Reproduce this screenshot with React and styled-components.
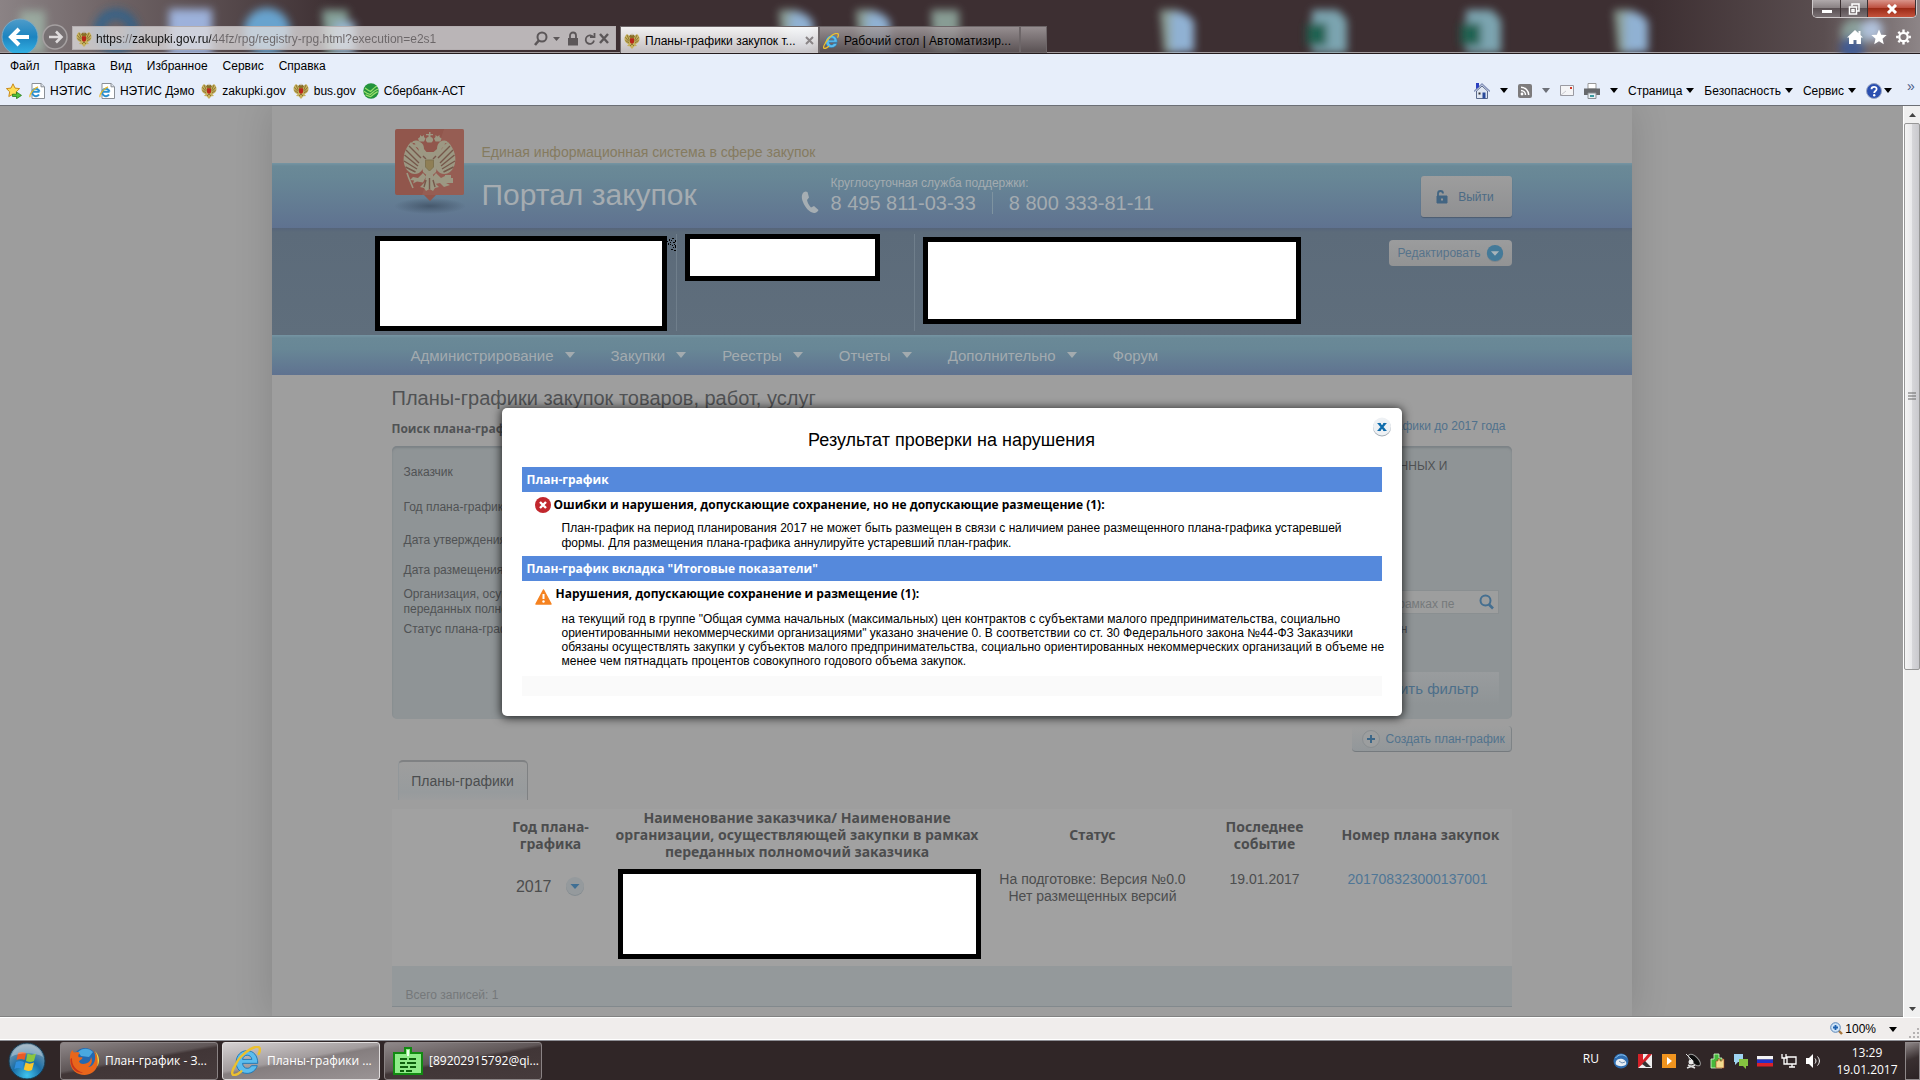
import React from "react";
import styled, { createGlobalStyle, css } from "styled-components";

const ui = `"Liberation Sans", Arial, sans-serif`;
const bold = `"Noto Sans", "Liberation Sans", sans-serif`;
const smallBold = `"Open Sans", "Liberation Sans", sans-serif`;

const GlobalStyle = createGlobalStyle`
  * { box-sizing: border-box; }
  body {
    margin: 0;
    font-family: ${ui};
    font-size: 12px;
    color: #000;
  }
  button, input, select { font-family: inherit; font-size: inherit; }
  a { text-decoration: none; }
  svg { flex: none; display: block; }
`;

const Screen = styled.div`
  display: flex;
  flex-direction: column;
  height: 100vh;
  overflow: hidden;
`;

/* ---------- browser frame ---------- */

const Glass = styled.header`
  position: relative;
  height: 54px;
  display: flex;
  align-items: flex-end;
  overflow: hidden;
  background: linear-gradient(90deg, #8b8385 0, #6f6466 110px, #3d2f32 340px, #3d2f32 86%, #5a4e50 95%, #8d8587 100%);
  border-bottom: 1px solid #241c1e;
  box-shadow: inset 0 -1px #a39c9e;
`;

const Backdrop = styled.svg`
  position: absolute;
  left: 0;
  top: 0;
  opacity: 0.88;
`;

const AddressRow = styled.div`
  position: relative;
  flex: 1;
  display: flex;
  align-items: flex-end;
  height: 54px;
  padding-right: 8px;
`;

const NavButtons = styled.div`
  width: 72px;
  height: 36px;
`;

const Address = styled.form`
  display: flex;
  align-items: center;
  gap: 4px;
  width: 544px;
  height: 24px;
  margin: 0 4px 3px 0;
  padding: 1px 5px 0 3px;
  background: rgba(222, 219, 220, 0.78);
  border: 1px solid #b4aeb0;
`;

const Url = styled.input`
  flex: 1;
  min-width: 0;
  padding: 0;
  border: 0;
  outline: 0;
  color: transparent;
  background: linear-gradient(90deg, #111 27px, #6b6668 27px, #6b6668 37px, #111 37px, #111 115px, #6b6668 115px);
  background-clip: text;
  -webkit-background-clip: text;
`;

const Tab = styled.button`
  display: flex;
  align-items: center;
  gap: 5px;
  width: ${(p) => p.$w}px;
  height: 27px;
  padding: 1px 4px 0 3px;
  border: 1px solid #6d6668;
  border-bottom: 0;
  white-space: nowrap;
  background: ${(p) => p.$active
    ? "linear-gradient(180deg, rgba(251,251,251,.95), rgba(230,227,228,.9) 60%, rgba(207,203,205,.9))"
    : "linear-gradient(180deg, rgba(165,158,160,.85), rgba(95,88,90,.8))"};
  span { flex: 1; text-align: left; }
`;

const GlassIcons = styled.div`
  display: flex;
  gap: 8px;
  margin-left: auto;
  margin-bottom: 8px;
`;

const Caption = styled.div`
  position: absolute;
  right: 3px;
  top: 0;
  display: flex;
  height: 18px;
  border: 1px solid #cfcacb;
  border-top: 0;
  border-radius: 0 0 5px 5px;
  overflow: hidden;
`;

const CaptionButton = styled.button`
  display: grid;
  place-items: center;
  width: ${(p) => p.$w}px;
  padding: 0;
  border: 0;
  border-right: 1px solid #3a3032;
  background: ${(p) => p.$close
    ? "linear-gradient(180deg, #d9948a, #bd5040 45%, #9c2a16 50%, #c4523c)"
    : "linear-gradient(180deg, #b0a9ab, #8a8284 45%, #5a5053 50%, #7a7174)"};
`;

const Bars = styled.div`
  background: #e7eefa;
  border-bottom: 1px solid #6c6f75;
`;

const MenuBar = styled.nav`
  display: flex;
  align-items: center;
  gap: 15px;
  height: 24px;
  padding-left: 10px;
`;

const PlainButton = styled.button`
  display: flex;
  align-items: center;
  gap: ${(p) => p.$gap || 4}px;
  padding: 0;
  border: 0;
  background: none;
  color: #000;
`;

const FavBar = styled.div`
  display: flex;
  align-items: center;
  gap: 7px;
  height: 27px;
  padding: 0 0 2px 6px;
`;

const FavLink = styled.a`
  display: flex;
  align-items: center;
  gap: 5px;
  color: #000;
`;

const Commands = styled.div`
  display: flex;
  align-items: center;
  gap: 10px;
  margin-left: auto;
`;

const Chevron = styled.button`
  align-self: flex-start;
  width: 18px;
  padding: 0;
  border: 0;
  background: none;
  color: #4a5a86;
  line-height: 6px;
  font-size: 14px;
`;

/* ---------- page ---------- */

const Viewport = styled.div`
  flex: 1;
  min-height: 0;
  display: flex;
  border-bottom: 1px solid #fff;
`;

const Page = styled.div`
  position: relative;
  flex: 1;
  overflow: hidden;
  background: #9d9d9d;
  border-bottom: 1px solid #828282;
`;

const Site = styled.div`
  width: 1360px;
  max-width: 100%;
  min-height: 100%;
  margin: 0 auto;
  background: #9e9e9e;
  box-shadow: 0 0 36px rgba(0, 0, 0, 0.15);
  color: #505254;
`;

const blueBand = "linear-gradient(180deg, #7695a3 0, #6a8997 3px, #688796 14px, #5f7290 100%)";

const Header = styled.header`
  display: grid;
  grid-template-columns: 90px 319px auto 1fr auto;
  grid-template-rows: 57px 65px;
  padding: 0 120px;
  background: ${blueBand} 0 57px / 100% 65px no-repeat;
`;

const Emblem = styled.a`
  grid-row: 1 / 3;
  padding-top: 23px;
`;

const Subtitle = styled.div`
  grid-column: 2 / -1;
  padding-top: 36px;
  font-size: 14px;
  line-height: 20px;
  color: #857b60;
`;

const SiteTitle = styled.div`
  padding-top: 12px;
  font-size: 30px;
  line-height: 40px;
  color: #a5acb1;
`;

const Support = styled.div`
  display: flex;
  align-items: flex-end;
  gap: 12px;
  height: 51px;
  line-height: 18px;
  color: #a3abb0;
`;

const Phones = styled.div`
  display: flex;
  font-size: 20px;
  line-height: 22px;
  span + span {
    margin-left: 16px;
    padding-left: 16px;
    border-left: 1px solid #7e93a0;
  }
`;

const Logout = styled.button`
  grid-column: 5;
  align-self: start;
  display: flex;
  align-items: center;
  justify-content: center;
  gap: 10px;
  width: 91px;
  height: 41px;
  margin-top: 13px;
  padding: 0 8px 0 6px;
  border: 0;
  border-radius: 3px;
  background: linear-gradient(180deg, #9d9d9d, #8f9092);
  box-shadow: 0 1px 1px #4d5c70;
  color: #4c6b85;
`;

const Strip = styled.div`
  display: grid;
  grid-template-columns: 301px 238px 1fr auto;
  height: 107px;
  padding: 6px 120px 7px 103px;
  background: linear-gradient(180deg, #56657a 0, #5c6b7a 4px, #5f6e7c 100%);
`;

const StripCell = styled.div`
  display: flex;
  align-items: flex-start;
  ${(p) => p.$line && css`
    padding-left: 8px;
    border-left: 1px solid #6f7e8b;
  `}
`;

const Redacted = styled.div`
  width: ${(p) => p.$w}px;
  height: ${(p) => p.$h}px;
  margin-top: ${(p) => p.$top || 0}px;
  border: 5px solid #000;
  background: #fff;
`;

const EditButton = styled.button`
  display: flex;
  align-items: center;
  gap: 5px;
  height: 26px;
  margin-top: 6px;
  padding: 0 8px 0 9px;
  border: 0;
  border-radius: 4px;
  background: linear-gradient(180deg, #9b9c9d, #929394);
  color: #56738b;
`;

const SiteNav = styled.nav`
  display: flex;
  align-items: center;
  gap: 36px;
  height: 40px;
  padding-left: 139px;
  background: ${blueBand};
  a {
    display: flex;
    align-items: center;
    gap: 11px;
    font-size: 15px;
    color: #a3abaf;
  }
`;

const Content = styled.main`
  padding: 11px 120px 0;
`;

const Heading = styled.h1`
  margin: 0;
  font-size: 20px;
  font-weight: 400;
  line-height: 24px;
`;

const SubRow = styled.div`
  display: flex;
  align-items: center;
  justify-content: space-between;
  height: 36px;
  padding-right: 6px;
  h2 {
    margin: 0;
    font: bold 12px ${smallBold};
  }
  a { color: #50718c; padding-bottom: 4px; }
`;

const Filter = styled.form`
  height: 273px;
  padding: 9px 13px 0 12px;
  border-radius: 5px;
  background: #8f9496;
  box-shadow: inset 0 2px 2px #7c8286;
`;

const Field = styled.div`
  display: flex;
  align-items: center;
  justify-content: space-between;
  height: ${(p) => p.$h}px;
  line-height: 15px;
  white-space: nowrap;
`;

const Value = styled.div`
  padding-top: ${(p) => p.$top || 0}px;
  padding-right: ${(p) => p.$right}px;
`;

const Control = styled.input`
  width: 300px;
  height: 22px;
  margin-right: 360px;
  border: 1px solid #83898c;
  background: #9c9d9e;
`;

const SearchBox = styled.div`
  display: flex;
  align-items: center;
  width: 600px;
  height: 24px;
  padding-right: 4px;
  background: #9d9e9e;
  border: 1px solid #8a8f91;
  input {
    flex: 1;
    padding: 4px 24px 0 0;
    border: 0;
    outline: 0;
    background: none;
    text-align: right;
  }
  input::placeholder { color: #767a7c; }
`;

const ClearButton = styled.button`
  display: block;
  height: 33px;
  margin: 32px 0 0 auto;
  padding: 0 20px;
  border: 0;
  background: linear-gradient(180deg, #999c9e, #8f9496);
  font-size: 15px;
  color: #4d6f8a;
`;

const CreateButton = styled.button`
  display: flex;
  align-items: center;
  gap: 6px;
  width: 160px;
  height: 26px;
  margin: 7px 0 0 auto;
  padding: 0 0 0 10px;
  border: 0;
  border-right: 1px solid #7e8386;
  border-bottom: 1px solid #757a7e;
  border-radius: 4px;
  background: linear-gradient(180deg, #9e9e9e, #92979a);
  white-space: nowrap;
  color: #52738d;
`;

const PlanTab = styled.button`
  display: block;
  width: 130px;
  height: 40px;
  margin: 8px 0 9px 6px;
  border: 0;
  border-top: 2px solid #7f8183;
  border-right: 1px solid #7f8183;
  border-left: 1px solid #92979a;
  border-radius: 5px 5px 0 0;
  background: linear-gradient(180deg, #9e9e9e, #979b9d 80%, #9c9d9e);
  font-size: 14px;
  color: #4b4d4f;
`;

const PlanTable = styled.table`
  width: 100%;
  table-layout: fixed;
  border-collapse: collapse;
  background: #a1a1a1;
  font-size: 14px;
  line-height: 17px;
  text-align: center;
  color: #4c4d4e;
  th {
    height: 52px;
    padding: 0 0 2px;
    font: bold 14px/17px ${bold};
    white-space: nowrap;
  }
  td {
    height: 104px;
    padding: 9px 0 0;
    vertical-align: top;
  }
  th:last-child, td:last-child { padding-right: 18px; }
  a { color: #4f7696; }
`;

const NameCell = styled.td`
  && { padding: 7px 0 0 21px; }
`;

const Year = styled.div`
  display: flex;
  align-items: center;
  justify-content: flex-end;
  gap: 13px;
  height: 30px;
  padding-right: 12px;
  font-size: 16px;
`;

const TableFooter = styled.div`
  height: 41px;
  padding: 22px 14px 0;
  background: #94999b;
  border-bottom: 1px solid #82898d;
  line-height: 15px;
  color: #75787a;
`;

/* ---------- dialog ---------- */

const Overlay = styled.div`
  position: absolute;
  inset: 0;
  display: flex;
  align-items: flex-start;
  justify-content: center;
  padding-top: 302px;
`;

const Dialog = styled.section`
  position: relative;
  width: 900px;
  padding: 20px;
  border-radius: 5px;
  background: #fff;
  box-shadow: 0 1px 10px 1px rgba(0, 0, 0, 0.75);
  h2 {
    margin: 0 0 15px;
    font-size: 18px;
    font-weight: 400;
    line-height: 24px;
    text-align: center;
  }
`;

const CloseButton = styled.button`
  position: absolute;
  right: 10px;
  top: 9px;
  padding: 0;
  border: 0;
  background: none;
`;

const SectionBar = styled.h3`
  margin: 0;
  padding-left: 5px;
  background: #5589dc;
  font: bold 12px/25px ${smallBold};
  color: #fff;
`;

const IssueTitle = styled.h4`
  display: flex;
  align-items: center;
  gap: 3px;
  height: 25px;
  margin: 0;
  padding-left: 13px;
  font: bold 12px ${smallBold};
`;

const IssueText = styled.p`
  margin: 0;
  padding: ${(p) => (p.$long ? "6px 0 8px 40px" : "4px 0 5px 40px")};
  line-height: ${(p) => (p.$long ? 14 : 15)}px;
  white-space: nowrap;
`;

const DialogFooter = styled.div`
  height: 20px;
  background: #fafafa;
`;

/* ---------- scrollbar, status bar, taskbar ---------- */

const Scrollbar = styled.div`
  display: flex;
  flex-direction: column;
  width: 17px;
  background: #f0f0f0;
  border-left: 1px solid #fff;
`;

const ScrollArrow = styled.button`
  display: grid;
  place-items: center;
  height: 17px;
  margin-top: ${(p) => (p.$end ? "auto" : 0)};
  padding: 0;
  border: 0;
  background: none;
`;

const Thumb = styled.div`
  display: grid;
  place-items: center;
  height: 60%;
  border: 1px solid #979797;
  border-radius: 2px;
  background: linear-gradient(90deg, #f5f5f5, #e9e9eb 48%, #d6d6d9 52%, #c9c9cd);
`;

const StatusBar = styled.div`
  display: flex;
  align-items: center;
  justify-content: flex-end;
  height: 22px;
  background: #f0edec;
  border-bottom: 1px solid #fff;
`;

const Taskbar = styled.footer`
  display: flex;
  align-items: center;
  gap: 4px;
  height: 40px;
  padding-left: 8px;
  background: #302627;
  border-top: 1px solid #8e8f95;
  font-family: "Open Sans", "Liberation Sans", sans-serif;
  color: #fff;
`;

const StartButton = styled.button`
  width: 48px;
  height: 38px;
  padding: 0;
  border: 0;
  background: none;
`;

const TaskButton = styled.button`
  flex: none;
  display: flex;
  align-items: center;
  gap: 6px;
  width: 158px;
  height: 38px;
  padding: 0 0 0 8px;
  border: 1px solid ${(p) => (p.$active ? "#e0dddd" : "#8a8384")};
  border-radius: 3px;
  background: ${(p) => p.$active
    ? "linear-gradient(170deg, #d5d1d2 0, #a29c9d 45%, #857e7f 50%, #9a9495 100%)"
    : "linear-gradient(170deg, #8f8889 0, #5f5657 45%, #413637 50%, #463b3c 100%)"};
  white-space: nowrap;
  color: #fff;
`;

const Tray = styled.div`
  display: flex;
  align-items: center;
  margin-left: auto;
`;

const TrayIcons = styled.div`
  display: flex;
  gap: 8px;
  padding: 0 8px 0 14px;
`;

const Lang = styled.span`
  padding-bottom: 4px;
`;

const Clock = styled.div`
  width: 76px;
  text-align: center;
  line-height: 17px;
`;

const ShowDesktop = styled.button`
  width: 15px;
  height: 38px;
  padding: 0;
  border: 1px solid #8e8889;
  background: linear-gradient(160deg, #8f8889, #3a3031 45%, #2c2324);
`;

/* ---------- icons ---------- */

const Arrow = ({ w = 8, h = 5, color = "#000", up }) => (
  <svg width={w} height={h} viewBox="0 0 10 6" preserveAspectRatio="none">
    <path d={up ? "M0 6h10L5 0z" : "M0 0h10L5 6z"} fill={color} />
  </svg>
);

const Eagle = ({ w = 16, h = 16 }) => (
  <svg width={w} height={h} viewBox="0 0 16 16">
    <path d="M6.500 5C5.500 3 4.500 1.800 3 1 1.500 2 .3 4 .5 6.500.7 9 2.500 10.800 4.700 11L3 13l2.600.3L8 16l2.400-2.700L13 13l-1.700-2c2.200-.2 4-2 4.200-4.500C15.700 4 14.500 2 13 1c-1.500.8-2.500 2-3.500 4z" fill="#c6b05c" />
    <path d="M3 2 5.500 7.500M1.300 4.300 5 8.500M1.500 7.500 5 10M13 2l-2.500 5.500M14.700 4.300 11 8.500M14.500 7.500 11 10M6 13l2-2 2 2" fill="none" stroke="#7b672a" strokeWidth=".8" />
    <path d="M5 3.500 6.300 1.500l1.200 1L8 .3l.5 2.200 1.200-1L11 3.500 9.500 5.300h-3z" fill="#8a7027" />
    <path d="M6 5.300h4v4.200L8 11 6 9.500z" fill="#b8261a" />
  </svg>
);

const IeGlyph = ({ size = 16 }) => (
  <svg width={size} height={size} viewBox="0 0 32 32">
    <path d="M28.500 18.500H12.300c.4 3.300 2.300 5.300 5 5.300 2 0 3.600-.9 4.500-2.800h6.200c-1.500 5-5.700 8.200-10.900 8.200-7 0-11.600-5-11.600-11.700C5.500 10.200 10.500 5 17 5c7.200 0 11.600 5.300 11.500 13.500zM22.300 14.300c-.5-2.800-2.400-4.500-5-4.500-2.500 0-4.400 1.700-5 4.500z" fill="#5cbdee" stroke="#1b76b8" strokeWidth="1" />
    <path d="M5 20C-.5 28 .8 31.500 4 31c2-.3 4.600-1.900 7-4M29.500 8.500C31.700 4.200 31 1.500 29 1 25 .2 17 4.500 10.500 11.500 8 14.200 6 17.500 4.800 20" fill="none" stroke="#ecc02f" strokeWidth="2.600" strokeLinecap="round" />
  </svg>
);

const IePage = () => (
  <svg width="16" height="16" viewBox="0 0 16 16">
    <path d="M3 .5h9l3.500 3.300v11.700H3z" fill="#fff" stroke="#8a8f96" />
    <path d="M12 .5v3.300h3.500" fill="#dde3ea" stroke="#8a8f96" />
    <path d="M10.500 8.800H3.800M10 11.500A3.700 3.700 0 1 1 10.500 8.500" fill="none" stroke="#2a8fd0" strokeWidth="2" />
    <path d="M1.200 14C0 12.500 3.500 6 9 3.800" fill="none" stroke="#e8b92a" strokeWidth="1.300" />
  </svg>
);

const FavStar = () => (
  <svg width="16" height="16" viewBox="0 0 16 16">
    <path d="m7 .8 2 4.300 4.600.5-3.400 3.200.9 4.700L7 11.200l-4.200 2.300.9-4.700L.4 5.600 5 5.100z" fill="#ffdf57" stroke="#c98b1c" />
    <path d="M6.500 11.200h4V9l5 3.400-5 3.300v-2.200h-4z" fill="#4fc23a" stroke="#2a7a1d" strokeWidth=".8" />
  </svg>
);

const SberIcon = () => (
  <svg width="16" height="16" viewBox="0 0 16 16">
    <circle cx="8" cy="8" r="7.700" fill="#23933c" />
    <path d="M2 5c2 1.500 3.500 2.500 5.500 3.500C10 6 12 4 14 3M1 8.200c2 1.600 4 2.600 6.300 3.300 2.700-2.500 5-4.500 7.900-5.500M2.500 11.800c2 1 3.500 1.500 5.200 1.800 2-2 4-3.500 7-5" fill="none" stroke="#9be06a" strokeWidth="1.200" />
  </svg>
);

const LogoEmblem = () => (
  <svg width="90" height="88" viewBox="0 0 90 88">
    <defs>
      <radialGradient id="logoShade">
        <stop offset="0" stopColor="#3c4d60" stopOpacity=".75" />
        <stop offset="1" stopColor="#3c4d60" stopOpacity="0" />
      </radialGradient>
    </defs>
    <ellipse cx="38" cy="77" rx="36" ry="8" fill="url(#logoShade)" />
    <path d="M5 0h65a2 2 0 0 1 2 2v62a2 2 0 0 1-2 2H44l-6 6-6-6H5a2 2 0 0 1-2-2V2a2 2 0 0 1 2-2z" fill="#91564c" />
    <path d="M52 0h18a2 2 0 0 1 2 2v62a2 2 0 0 1-2 2H30z" fill="#9a6459" opacity=".55" />
    <g fill="#9c9883">
      <path d="M37 3h1.500v2H41v1.300h-2.500V8c3 .5 3.500 4 1 5.500h-4C33 12 33.500 8.500 36.500 8V6.300H34V5h3z" />
      <path d="M28 13c-3-2-7-2-8 1 2-.3 3 0 3.500 1.500-1.500 0-3 .6-3 2.500 3-.8 5 0 6 2 .5 2.500 0 5 3 8h17c3-3 2.500-5.500 3-8 1-2 3-2.800 6-2 0-1.900-1.500-2.500-3-2.500.5-1.500 1.500-1.800 3.500-1.500-1-3-5-3-8-1-2 1.300-3 4-3 7l-3.500 3h-7L32 20c0-3-1-5.700-4-7z" />
      <path d="M26 9.500 28 8V6l2 1.500L32 6v2l1.500 1.500-1.500 3h-5zM42 9.500 43.500 8V6l2 1.500 2-1.500v2l2 1.500-1 3h-5z" />
      <path d="M31 24C26 23 24 17 19 13c-3 3-6 8-7 13-1 6 0 12 4 16 3 3 7 4 11 2 3-2 5-5 5-9zM44 24c5-1 7-7 12-11 3 3 6 8 7 13 1 6 0 12-4 16-3 3-7 4-11 2-3-2-5-5-5-9z" />
      <path d="M31 23h13l2 9-2 11-6.500 6-6.500-6-2-11z" />
      <path d="M31 44l-5 5-5-1-3 3 4 .5-1 3 4-2 6 1 3-6zM44 44l5 5 4-2 3 3-2 4 4 2-6 2-4-4-5 1-3-6zM34 46h7l1 7 5 5-4 1-2 3-3.500-2-3.500 2-2-3-4-1 5-5z" />
      <path d="M53 46h6v3h2v5h-8z" />
    </g>
    <path d="M14 21l13 13M12.500 26 26 37M12 32l13 8M13.500 38l10 5M17 17l12 12M61 21 48 34M62.500 26 49 37M63 32l-13 8M61.500 38l-10 5M58 17 46 29M34 51l-2 7M37.500 49v11M41 51l2 7M31 27l3 3M44 27l-3 3" stroke="#76584b" strokeWidth="1.400" />
    <path d="M33.500 31h8v7l-4 4-4-4z" fill="#8f7f55" stroke="#7f7350" />
    <path d="M15 44c2 6 4 10 6 15" stroke="#9c9883" strokeWidth="1.600" fill="none" />
  </svg>
);

const DesktopBlur = () => (
  <Backdrop width="1920" height="54" viewBox="0 0 1920 54">
    <defs>
      <filter id="soft" x="-5%" y="-40%" width="110%" height="180%"><feGaussianBlur stdDeviation="4" /></filter>
    </defs>
    <g filter="url(#soft)">
      <rect x="20" y="11" width="25" height="42" fill="#9db0a4" />
      <circle cx="116" cy="31" r="17" fill="none" stroke="#2c628f" strokeWidth="10" />
      <rect x="169" y="9" width="43" height="46" fill="#a6bfee" />
      <circle cx="267" cy="31" r="23" fill="#6cb1e2" />
      <path d="M322 10h26v44h-22z" fill="#8fb0a5" />
      <path d="M335 22h20v31h-20z" fill="#a6cbe8" />
      {[779, 856, 1160, 1614].map((x) => (
        <g key={x}>
          <path d={`M${x} 10h20v43h-16z`} fill="#97b0a6" />
          <path d={`M${x + 11} 13h14l9 8v31h-23z`} fill="#9cc4ea" />
        </g>
      ))}
      <path d="M931 10h28v43h-25z" fill="#93aca2" />
      {[1312, 1466].map((x) => (
        <g key={x}>
          <path d={`M${x} 10h26l9 10v33h-35z`} fill="#85b5c2" />
          <rect x={x - 5} y="23" width="20" height="23" fill="#1e6b56" />
        </g>
      ))}
      <circle cx="1855" cy="33" r="14" fill="#8fa8a2" />
      <circle cx="1872" cy="30" r="11" fill="#b9cdea" />
      <circle cx="1852" cy="48" r="12" fill="#3d5c9a" />
    </g>
  </Backdrop>
);

const BackForward = () => (
  <svg width="72" height="36" viewBox="0 0 72 36">
    <defs>
      <linearGradient id="backFill" x1="0" y1="0" x2="0" y2="1">
        <stop offset="0" stopColor="#4f9cc9" /><stop offset=".5" stopColor="#1c84c0" /><stop offset="1" stopColor="#35b4e6" />
      </linearGradient>
    </defs>
    <circle cx="20" cy="20" r="18" fill="url(#backFill)" stroke="#7fa8c0" />
    <path d="M29 20H12M19 12l-8 8 8 8" fill="none" stroke="#fff" strokeWidth="4" />
    <circle cx="55" cy="20" r="12" fill="#777173" stroke="#a5a0a1" strokeWidth="1.500" />
    <path d="M49 20h11M56 14.500l5.500 5.500-5.500 5.500" fill="none" stroke="#dedbdc" strokeWidth="2.600" />
  </svg>
);

const FirefoxIcon = () => (
  <svg width="30" height="34" viewBox="0 0 30 30">
    <circle cx="16" cy="14" r="12" fill="#2368b0" />
    <path d="M9 6c4-4.500 11-4.500 15 0l-4 5-8-1z" fill="#49a8e0" />
    <path d="M1.500 7C2.500 5 3 4.500 3.500 4c.3 1.500 1 2.300 2 2.600 1.500-.8 4-.9 5.500.4-1.500 1-2 2.500-1.500 4 1.500.5 4-.5 4 1-.3 1.600-3 2-3.500 3.500 1 2.500 4 3 7 2 3.500-1.200 5-3.500 5-6.500 2 4 .5 8-3 10 5 0 8-6 7-12-.3-1.500-.8-3-1.500-4 4 4 5.500 10 3.700 15C26.500 25.500 21.500 29 15.500 29 8 29 1.500 24 1 15c-.2-3 0-6 .5-8z" fill="#e8661b" />
    <path d="M26 5c4 4 5.500 10 2.200 15.500 1-6 .3-11-2.200-15.500z" fill="#f7d640" />
    <path d="M3 12c-.5 7 4 13 11 14.500C6 28 1 20 1.500 13z" fill="#c8351a" />
  </svg>
);

const MessengerIcon = () => (
  <svg width="30" height="30" viewBox="0 0 30 30">
    <path d="M1 7h11V2h6v5h11v21H1z" fill="#8fec89" stroke="#128a12" strokeWidth="2" />
    <path d="M14 4h2v6h-2z" fill="#eaffea" />
    <path d="M7 13h7m2 0h7M7 17h5m2 0h9M7 21h8m2 0h6M7 25h4m2 0h6" stroke="#0d600d" strokeWidth="1.800" />
  </svg>
);

const StartOrb = () => (
  <svg width="38" height="38" viewBox="0 0 38 38">
    <defs>
      <radialGradient id="orb" cx=".5" cy=".9" r=".9">
        <stop offset="0" stopColor="#3fc4ee" /><stop offset=".45" stopColor="#1b6ea6" /><stop offset="1" stopColor="#8ea4b2" />
      </radialGradient>
    </defs>
    <circle cx="19" cy="19" r="18" fill="url(#orb)" stroke="#15394f" />
    <path d="M10 11c3-1.500 5.500-1.500 8 0l-1.500 7c-2.500-1.500-5-1.500-8 0z" fill="#ea5a26" />
    <path d="M19.500 11.500c3 1.500 5.500 1.500 8.500 0l-2 7.500c-3 1.500-5.500 1-8 0z" fill="#8cc63f" />
    <path d="M8 20c3-1.500 5.500-1.500 8 0l-1.700 7c-2.500-1.500-5-1.500-8 0z" fill="#2f8fdc" />
    <path d="M17.500 20.500c3 1.500 5.500 1.500 8.500 0L24 28c-3 1.500-5.500 1-8.200-.5z" fill="#fbc62c" />
    <path d="M3 15A16.500 16.500 0 0 1 35 15C27 10 11 10 3 15z" fill="#fff" opacity=".3" />
  </svg>
);

const Down = ({ fill, color, size = 20 }) => (
  <svg width={size} height={size} viewBox="0 0 20 20">
    <circle cx="10" cy="11" r="9" fill="#6f7d86" opacity=".6" />
    <circle cx="10" cy="10" r="9" fill={fill} />
    <path d="M5.500 8h9L10 13z" fill={color} />
  </svg>
);

const trayIcons = [
  <svg key="bird" width="16" height="16" viewBox="0 0 16 16"><circle cx="8" cy="8" r="7.500" fill="#2e6db0" /><path d="M3 11.500C1.500 8 5 4.500 9.500 6c3 1 4.500 3.500 3.500 5.500-2 2-7 2.500-10 0z" fill="#e6edf4" /><path d="M2.500 5c3-4 8-4 11-1" stroke="#8cc4ee" fill="none" /><path d="m6 8 3 2 3-1" stroke="#6e8fb4" fill="none" /></svg>,
  <svg key="k" width="16" height="16" viewBox="0 0 16 16"><path d="M1 1h14v14H1z" fill="#eee" /><path d="M1 1h5v6l5-6h4L8 9l-7 6z" fill="#d32027" /><path d="m8 8 6 6H9L5 11z" fill="#333" /></svg>,
  <svg key="play" width="16" height="16" viewBox="0 0 16 16"><path d="M1 1h14v14H1z" fill="#f0941f" /><path d="m6 4 5 4-5 4z" fill="#fff" /></svg>,
  <svg key="dish" width="16" height="16" viewBox="0 0 16 16"><ellipse cx="9.500" cy="7" rx="3.500" ry="7.500" transform="rotate(-45 9.500 7)" fill="#0c0c0c" stroke="#9a9a9a" /><path d="M1 1l6 6" stroke="#ddd" /><circle cx="6" cy="9" r="2.500" fill="#e8e8e8" /><path d="M2 15l8-3M3 12l7 3" stroke="#ddd" strokeWidth="1.500" /></svg>,
  <svg key="agent" width="16" height="16" viewBox="0 0 16 16"><path d="M5 1h5v4h3v10H2V6h3z" fill="#46b83c" stroke="#d9ffd0" strokeWidth=".8" /><path d="M7 8h2V6h2v2h2V6h2v9H7z" fill="#f2dc8e" stroke="#a33d1f" strokeWidth=".6" /></svg>,
  <svg key="chat" width="16" height="16" viewBox="0 0 16 16"><path d="M1 1h9v8H5l-3 3V9H1z" fill="#9fd4f2" /><path d="M6 6h9v7h-2v3l-3-3H6z" fill="#84c440" /></svg>,
  <svg key="flag" width="16" height="16" viewBox="0 0 16 16"><path d="M0 3h16v3.500H0z" fill="#f4f4f4" /><path d="M0 6.500h16V10H0z" fill="#2332c8" /><path d="M0 10h16v3.500H0z" fill="#d8222a" /></svg>,
  <svg key="net" width="16" height="16" viewBox="0 0 16 16" fill="none" stroke="#fff" strokeWidth="1.300"><path d="M6 4h9v7H6zM8 14h6M11 11v3M1 1v4h4V1M3 5v6h3" /></svg>,
  <svg key="sound" width="16" height="16" viewBox="0 0 16 16"><path d="M1 5h3l4-4v14l-4-4H1z" fill="#fff" /><path d="M10 5.500c1.300 1.500 1.300 3.500 0 5M12.500 3.500c2.500 2.800 2.500 6.200 0 9" stroke="#fff" fill="none" /></svg>
];

const siteMenu = ["Администрирование", "Закупки", "Реестры", "Отчеты", "Дополнительно"];

function BrowserTop() {
  return (
    <>
      <Glass>
        <DesktopBlur />
        <AddressRow>
          <NavButtons><BackForward /></NavButtons>
          <Address>
            <Eagle />
            <Url aria-label="Адрес" defaultValue="https://zakupki.gov.ru/44fz/rpg/registry-rpg.html?execution=e2s1" />
            <svg width="76" height="16" viewBox="0 0 76 16">
              <g fill="none" stroke="#5c5759" strokeWidth="2">
                <circle cx="8" cy="6" r="4.500" />
                <path d="M4.800 9.500 1 14" strokeWidth="2.600" />
                <path d="M59.500 6.500A4.200 4.200 0 1 0 60 9.500M56 6h4.500V2" strokeWidth="1.800" />
                <path d="m66 3 8 9m0-9-8 9" strokeWidth="2.400" />
              </g>
              <path d="M19 6h7l-3.500 4z" fill="#5c5759" />
              <path d="M34 7h10v7.500H34z" fill="#5c5759" />
              <path d="M36 7V4.500a3 3 0 0 1 6 0V7" fill="none" stroke="#5c5759" strokeWidth="1.800" />
            </svg>
          </Address>
          <Tab $w={199} $active>
            <Eagle />
            <span>Планы-графики закупок т...</span>
            <svg width="9" height="9" viewBox="0 0 9 9"><path d="m1 1 7 7m0-7L1 8" stroke="#8a8587" strokeWidth="2" /></svg>
          </Tab>
          <Tab $w={201}>
            <IeGlyph />
            <span>Рабочий стол | Автоматизир...</span>
          </Tab>
          <Tab $w={27} aria-label="Новая вкладка" />
          <GlassIcons>
            <svg width="16" height="16" viewBox="0 0 16 16"><path d="M8 1 0 8.500h2V15h4.500v-4h3v4H14V8.500h2L13.500 6V2h-2v2.300z" fill="#fff" /></svg>
            <svg width="16" height="16" viewBox="0 0 16 16"><path d="m8 .5 2.200 5.200 5.500.4-4.200 3.600 1.300 5.500L8 12.300l-4.800 2.900 1.300-5.500L.3 6.100l5.500-.4z" fill="#fff" /></svg>
            <svg width="17" height="16" viewBox="0 0 16 16"><circle cx="8" cy="8" r="4.200" fill="none" stroke="#fff" strokeWidth="2.200" /><path d="M8 .6v2.400M8 13v2.400M.6 8H3M13 8h2.400M2.800 2.800l1.700 1.700M11.500 11.500l1.700 1.700M13.200 2.800l-1.700 1.700M4.500 11.500l-1.700 1.700" stroke="#fff" strokeWidth="2.400" /></svg>
          </GlassIcons>
        </AddressRow>
        <Caption>
          <CaptionButton $w={28} aria-label="Свернуть"><svg width="12" height="12" viewBox="0 0 12 12"><path d="M1 7h10v3H1z" fill="#fff" /></svg></CaptionButton>
          <CaptionButton $w={27} aria-label="Восстановить"><svg width="12" height="12" viewBox="0 0 12 12" fill="none" stroke="#fff" strokeWidth="1.500"><path d="M4 3V1h7v7H9M1.500 4h7v7h-7zM4 6.500h2v2H4z" /></svg></CaptionButton>
          <CaptionButton $w={48} $close aria-label="Закрыть"><svg width="12" height="10" viewBox="0 0 12 10"><path d="m2 1 8 8m0-8L2 9" stroke="#fff" strokeWidth="3" /></svg></CaptionButton>
        </Caption>
      </Glass>
      <Bars>
        <MenuBar>
          {["Файл", "Правка", "Вид", "Избранное", "Сервис", "Справка"].map((m) => (
            <PlainButton key={m}>{m}</PlainButton>
          ))}
        </MenuBar>
        <FavBar>
          <FavStar />
          <FavLink href="#netis"><IePage />НЭТИС</FavLink>
          <FavLink href="#demo"><IePage />НЭТИС Дэмо</FavLink>
          <FavLink href="#zakupki"><Eagle />zakupki.gov</FavLink>
          <FavLink href="#bus"><Eagle />bus.gov</FavLink>
          <FavLink href="#sber"><SberIcon />Сбербанк-АСТ</FavLink>
          <Commands>
            <PlainButton $gap={10} aria-label="Домашняя страница">
              <svg width="16" height="16" viewBox="0 0 16 16"><path d="M2.500 8v7.500h11V8L8 3z" fill="#dfe6f2" stroke="#5b6a8c" /><path d="M0 8.500 8 1l8 7.500" fill="none" stroke="#8a97bd" strokeWidth="1.500" /><path d="M2 0h3v4L2 6z" fill="#2a3fc0" /><path d="M8.500 9.500h3v6h-3z" fill="#2a4a9a" /><path d="M4.500 9.500h2v2h-2z" fill="#333" /></svg>
              <Arrow />
            </PlainButton>
            <PlainButton $gap={10} aria-label="Каналы">
              <svg width="14" height="14" viewBox="0 0 14 14"><rect width="14" height="14" rx="2" fill="#7d7b7c" /><circle cx="4" cy="10" r="1.400" fill="#fff" /><path d="M3 6.500a4.500 4.500 0 0 1 4.500 4.500M3 3.300A7.700 7.700 0 0 1 10.700 11" stroke="#fff" strokeWidth="1.500" fill="none" /></svg>
              <Arrow color="#6d7078" />
            </PlainButton>
            <PlainButton aria-label="Почта">
              <svg width="14" height="11" viewBox="0 0 14 11"><path d="M.5.500h13v10H.5z" fill="#f4f4f6" stroke="#9a9aa2" /><path d="M10 2h2v2h-2z" fill="#d23a2a" /><path d="m1 10 5-4" stroke="#c9c9cf" /></svg>
            </PlainButton>
            <PlainButton $gap={10} aria-label="Печать">
              <svg width="16" height="16" viewBox="0 0 16 16"><path d="M4 .5h8V6H4z" fill="#fff" stroke="#999" /><path d="M0 5.500h16V12H0z" fill="#66686b" /><path d="M4 10h8v5.500H4z" fill="#e8eef2" stroke="#8a8f93" /><path d="M6 12h4v2H6z" fill="#3a9aa0" /></svg>
              <Arrow />
            </PlainButton>
            <PlainButton>Страница<Arrow /></PlainButton>
            <PlainButton>Безопасность<Arrow /></PlainButton>
            <PlainButton>Сервис<Arrow /></PlainButton>
            <PlainButton $gap={2} aria-label="Справка">
              <svg width="16" height="16" viewBox="0 0 16 16"><circle cx="8" cy="8" r="7.500" fill="#2a4fb0" stroke="#9aa6c4" /><path d="M5.500 6.200C5.500 3 10.800 3 10.600 6.200 10.500 8 8.200 8 8.200 10" fill="none" stroke="#fff" strokeWidth="1.800" /><circle cx="8.200" cy="12.300" r="1.200" fill="#fff" /></svg>
              <Arrow />
            </PlainButton>
            <Chevron>»</Chevron>
          </Commands>
        </FavBar>
      </Bars>
    </>
  );
}

function ViolationsDialog() {
  return (
    <Overlay>
      <Dialog role="dialog" aria-labelledby="dialog-title">
        <h2 id="dialog-title">Результат проверки на нарушения</h2>
        <CloseButton aria-label="Закрыть окно">
          <svg width="20" height="20" viewBox="0 0 20 20">
            <circle cx="10" cy="10.500" r="9" fill="#a3acb5" />
            <circle cx="10" cy="9.500" r="9" fill="#eef1f4" />
            <path d="m7 6.500 6 7m0-7-6 7" stroke="#0f6cab" strokeWidth="2.400" />
            <path d="M5.500 6.500h3.200m2.600 0h3.200m-9 7h3.200m2.600 0h3.200" stroke="#0f6cab" />
          </svg>
        </CloseButton>
        <SectionBar>План-график</SectionBar>
        <IssueTitle>
          <svg width="16" height="16" viewBox="0 0 16 16"><circle cx="8" cy="8" r="8" fill="#c1272d" /><path d="m5 5 6 6m0-6-6 6" stroke="#fff" strokeWidth="2.400" /></svg>
          Ошибки и нарушения, допускающие сохранение, но не допускающие размещение (1):
        </IssueTitle>
        <IssueText>
          План-график на период планирования 2017 не может быть размещен в связи с наличием ранее размещенного плана-графика устаревшей<br />
          формы. Для размещения плана-графика аннулируйте устаревший план-график.
        </IssueText>
        <SectionBar>План-график вкладка "Итоговые показатели"</SectionBar>
        <IssueTitle>
          <svg width="18" height="22" viewBox="0 0 18 22"><path d="M8.500 7 1 21h15z" fill="#f58220" stroke="#f58220" strokeWidth="1.500" strokeLinejoin="round" /><path d="M8.500 11v5" stroke="#fff" strokeWidth="2" /><circle cx="8.500" cy="18.500" r="1.200" fill="#fff" /></svg>
          Нарушения, допускающие сохранение и размещение (1):
        </IssueTitle>
        <IssueText $long>
          на текущий год в группе "Общая сумма начальных (максимальных) цен контрактов с субъектами малого предпринимательства, социально<br />
          ориентированными некоммерческими организациями" указано значение 0. В соответствии со ст. 30 Федерального закона №44-ФЗ Заказчики<br />
          обязаны осуществлять закупки у субъектов малого предпринимательства, социально ориентированных некоммерческих организаций в объеме не<br />
          менее чем пятнадцать процентов совокупного годового объема закупок.
        </IssueText>
        <DialogFooter />
      </Dialog>
    </Overlay>
  );
}

function SiteHeader() {
  return (
    <>
      <Header>
        <Emblem href="#home" aria-label="На главную"><LogoEmblem /></Emblem>
        <Subtitle>Единая информационная система в сфере закупок</Subtitle>
        <SiteTitle>Портал закупок</SiteTitle>
        <Support>
          <svg width="18" height="24" viewBox="0 0 18 24"><path d="M4.500 1.500c-4 1-4.500 5.500-2.500 10.500s6 10.500 11 11c2 .2 4-1.500 4.500-3l-4.500-4-3 1.500C8 15.500 6.500 12.500 6 10l2-2.500-1.500-5.500z" fill="#a6aeb3" /></svg>
          <div>
            Круглосуточная служба поддержки:
            <Phones><span>8 495 811-03-33</span><span>8 800 333-81-11</span></Phones>
          </div>
        </Support>
        <Logout>
          <svg width="12" height="14" viewBox="0 0 12 14"><path d="M1 6h10v7H1z" fill="#426582" stroke="#426582" strokeLinejoin="round" /><path d="M2 6V3.500a2.500 2.500 0 0 1 5 0" fill="none" stroke="#426582" strokeWidth="1.800" /><path d="M5 8.500h2v2H5z" fill="#959697" /></svg>
          Выйти
        </Logout>
      </Header>
      <Strip>
        <StripCell>
          <Redacted $w={292} $h={95} $top={2} />
          <svg width="9" height="18" viewBox="0 0 9 18"><path d="M2 5h1v2H2zM5 4h2v1H5zM8 6h1v2H8zM1 9h1v2H1zM3 10h1v1H3zM6 8h2v1H6zM5 11h1v1H5zM8 11h1v3H8zM0 7h1v1H0zM4 15h2v1H4zM7 16h2v1H7zM4 6h1v1H4zM7 10h1v1H7zM3 8h1v1H3zM6 13h1v1H6z" fill="#000" /></svg>
        </StripCell>
        <StripCell $line><Redacted $w={195} $h={47} /></StripCell>
        <StripCell $line><Redacted $w={378} $h={87} $top={3} /></StripCell>
        <StripCell>
          <EditButton>Редактировать<Down size={18} fill="#447a99" color="#a9b4ba" /></EditButton>
        </StripCell>
      </Strip>
      <SiteNav>
        {siteMenu.map((m) => (
          <a key={m} href="#menu">{m}<Arrow w={10} h={6} color="#a3abaf" /></a>
        ))}
        <a href="#forum">Форум</a>
      </SiteNav>
    </>
  );
}

function PlanFilter() {
  return (
    <Filter>
      <Field $h={34}>
        <span>Заказчик</span>
        <Value $right={51} $top={3}>УПРАВЛЕНИЕ ИМУЩЕСТВЕННЫХ И<br />ЗЕМЕЛЬНЫХ ОТНОШЕНИЙ</Value>
      </Field>
      <Field $h={36}><label htmlFor="year">Год плана-графика</label><Control id="year" /></Field>
      <Field $h={30}><label htmlFor="approved">Дата утверждения</label><Control id="approved" /></Field>
      <Field $h={30}><label htmlFor="placed">Дата размещения</label><Control id="placed" /></Field>
      <Field $h={33}>
        <label htmlFor="org">Организация, осуществ.<br />переданных полномоч.</label>
        <SearchBox>
          <input id="org" placeholder="Организация, осуществляющая закупки в рамках пе" />
          <svg width="15" height="16" viewBox="0 0 15 16"><circle cx="6.500" cy="6.500" r="5" fill="none" stroke="#456f90" strokeWidth="2" /><path d="m10 10.500 4 4" stroke="#456f90" strokeWidth="2.600" /></svg>
        </SearchBox>
      </Field>
      <Field $h={22}>
        <span>Статус плана-графика</span>
        <Value $right={91}>Размещен</Value>
      </Field>
      <ClearButton type="button">Очистить фильтр</ClearButton>
    </Filter>
  );
}

function Plans() {
  return (
    <>
      <PlanTable>
        <colgroup>
          {[113, 92, 401, 190, 154, 170].map((w) => <col key={w} width={w} />)}
        </colgroup>
        <thead>
          <tr>
            <th />
            <th>Год плана-<br />графика</th>
            <th>Наименование заказчика/ Наименование<br />организации, осуществляющей закупки в рамках<br />переданных полномочий заказчика</th>
            <th>Статус</th>
            <th>Последнее<br />событие</th>
            <th>Номер плана закупок</th>
          </tr>
        </thead>
        <tbody>
          <tr>
            <td />
            <td><Year>2017<Down fill="#959a9d" color="#3f6f94" /></Year></td>
            <NameCell><Redacted $w={363} $h={90} /></NameCell>
            <td>На подготовке: Версия №0.0<br />Нет размещенных версий</td>
            <td>19.01.2017</td>
            <td><a href="#plan">201708323000137001</a></td>
          </tr>
        </tbody>
      </PlanTable>
      <TableFooter>Всего записей: 1</TableFooter>
    </>
  );
}

export default function App() {
  return (
    <Screen>
      <GlobalStyle />
      <BrowserTop />
      <Viewport>
        <Page>
          <Site>
            <SiteHeader />
            <Content>
              <Heading>Планы-графики закупок товаров, работ, услуг</Heading>
              <SubRow>
                <h2>Поиск плана-графика</h2>
                <a href="#old">Планы-графики до 2017 года</a>
              </SubRow>
              <PlanFilter />
              <CreateButton>
                <svg width="18" height="20" viewBox="0 0 18 20"><circle cx="9" cy="10" r="8.500" fill="#9c9e9f" stroke="#898e91" /><path d="M9 6v8M5 10h8" stroke="#3d6788" strokeWidth="2" /></svg>
                Создать план-график
              </CreateButton>
              <PlanTab>Планы-графики</PlanTab>
              <Plans />
            </Content>
          </Site>
          <ViolationsDialog />
        </Page>
        <Scrollbar>
          <ScrollArrow aria-label="Вверх"><Arrow w={7} h={4} color="#444" up /></ScrollArrow>
          <Thumb><svg width="8" height="9" viewBox="0 0 8 9"><path d="M0 1h8M0 4h8M0 7h8" stroke="#666" /></svg></Thumb>
          <ScrollArrow $end aria-label="Вниз"><Arrow w={7} h={4} color="#444" /></ScrollArrow>
        </Scrollbar>
      </Viewport>
      <StatusBar>
        <PlainButton $gap={2}>
          <svg width="13" height="13" viewBox="0 0 13 13"><path d="m8 8 4 4" stroke="#a8763c" strokeWidth="2.400" /><circle cx="5.500" cy="5.500" r="4.800" fill="#cfe4f8" stroke="#5a86b8" /><path d="M5.500 3v5M3 5.500h5" stroke="#1f62b0" strokeWidth="1.800" /></svg>
          100%
        </PlainButton>
        <svg width="44" height="20" viewBox="0 0 44 20"><path d="M13 8h8l-4 5z" /><path d="M41 9h2v2h-2zM41 13h2v2h-2zM37 13h2v2h-2zM41 17h2v2h-2zM37 17h2v2h-2zM33 17h2v2h-2z" fill="#b5b2b2" /></svg>
      </StatusBar>
      <Taskbar>
        <StartButton aria-label="Пуск"><StartOrb /></StartButton>
        <TaskButton><FirefoxIcon />План-график - З...</TaskButton>
        <TaskButton $active><IeGlyph size={30} />Планы-графики ...</TaskButton>
        <TaskButton><MessengerIcon />[89202915792@qi...</TaskButton>
        <Tray>
          <Lang>RU</Lang>
          <TrayIcons>{trayIcons}</TrayIcons>
          <Clock>13:29<br />19.01.2017</Clock>
          <ShowDesktop aria-label="Показать рабочий стол" />
        </Tray>
      </Taskbar>
    </Screen>
  );
}
